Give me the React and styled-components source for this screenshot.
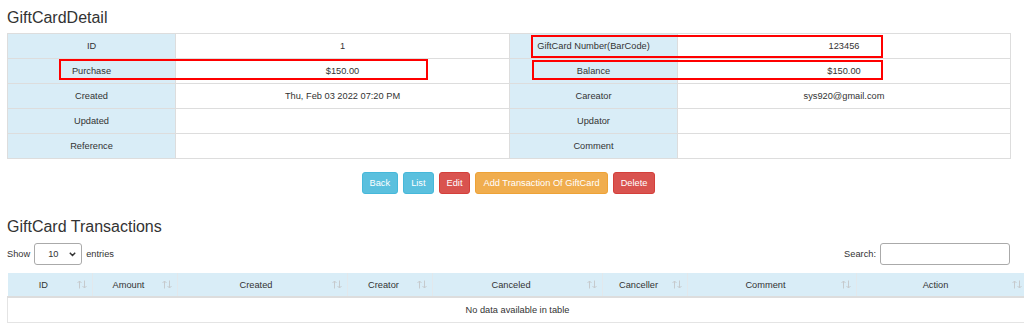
import React from 'react';
import styled, { createGlobalStyle } from 'styled-components';

const GlobalStyle = createGlobalStyle`
    html, body {
        margin: 0;
        padding: 0;
        overflow: hidden;
        background: #fff;
    }
    body {
        font-family: "Liberation Sans", Arial, Helvetica, sans-serif;
        color: #333;
    }
`;

const Page = styled.div`
    width: 1024px;
    padding-left: 7px;
    box-sizing: border-box;
    overflow: hidden;
`;

const Heading = styled.h3`
    margin: ${(p) => p.$top}px 0 ${(p) => p.$bottom}px;
    font-size: 16px;
    line-height: 18px;
    font-weight: normal;
    color: #333;
`;

const DetailWrap = styled.div`
    position: relative;
    width: 1003px;
`;

const DetailTable = styled.table`
    width: 1003px;
    border-collapse: collapse;
    table-layout: fixed;
`;

const Cell = styled.td`
    border: 1px solid #ddd;
    padding: 0 5px;
    line-height: 24px;
    height: 24px;
    font-size: 9.25px;
    text-align: center;
    white-space: nowrap;
    background: ${(p) => (p.$label ? '#d9edf7' : '#fff')};
    color: #333;
`;

const Highlight = styled.div`
    position: absolute;
    top: ${(p) => p.$top}px;
    left: ${(p) => p.$left}px;
    width: ${(p) => p.$width}px;
    height: ${(p) => p.$height}px;
    border: 2px solid #f00;
    box-sizing: border-box;
    pointer-events: none;
`;

const ButtonBar = styled.div`
    width: 1003px;
    margin-top: 13px;
    display: flex;
    justify-content: center;
    gap: 5px;
`;

const colors = {
    info: ['#5bc0de', '#46b8da'],
    danger: ['#d9534f', '#d43f3a'],
    warning: ['#f0ad4e', '#eea236'],
};

const Button = styled.button`
    height: 22px;
    padding: 0 7px;
    border: 1px solid ${(p) => colors[p.$kind][1]};
    border-radius: 3px;
    background: ${(p) => colors[p.$kind][0]};
    color: #fff;
    font-family: inherit;
    font-size: 9.25px;
    line-height: 20px;
    cursor: pointer;
`;

const Controls = styled.div`
    width: 1003px;
    display: flex;
    justify-content: space-between;
    align-items: center;
    margin-bottom: 8px;
    font-size: 9.25px;
    color: #333;
`;

const ControlGroup = styled.label`
    display: flex;
    align-items: center;
    gap: 4px;
`;

const SelectBox = styled.div`
    position: relative;
    width: 48px;
    height: 22px;
`;

const Select = styled.select`
    appearance: none;
    width: 100%;
    height: 100%;
    border: 1px solid #aaa;
    border-radius: 3px;
    background: #fff;
    padding: 0 0 0 13px;
    font-family: inherit;
    font-size: 9.25px;
    color: #333;
`;

const Chevron = styled.svg`
    position: absolute;
    right: 6px;
    top: 9px;
    pointer-events: none;
`;

const SearchInput = styled.input`
    width: 130px;
    height: 22px;
    box-sizing: border-box;
    border: 1px solid #aaa;
    border-radius: 3px;
    padding: 0 4px;
    font-size: 9.25px;
`;

const TxTable = styled.table`
    width: 1020px;
    border-collapse: collapse;
    table-layout: fixed;
`;

const HeadCell = styled.th`
    background: #d9edf7;
    border-right: 1px solid #e2e8ec;
    border-bottom: 2px solid #ddd;
    padding: 0 5px;
    height: 23px;
    font-size: 9.25px;
    font-weight: normal;
    color: #333;
`;

const HeadInner = styled.div`
    display: flex;
    align-items: center;
`;

const HeadLabel = styled.span`
    flex: 1;
    text-align: center;
    padding-right: 3px;
`;

const EmptyCell = styled.td`
    border: 1px solid #e4e4e4;
    border-top: none;
    line-height: 24px;
    height: 24px;
    padding: 0;
    text-align: center;
    font-size: 9.25px;
    color: #333;
`;

function SortIcon() {
    return (
        <svg width="10" height="9" viewBox="0 0 10 9" fill="none" stroke="#c6cacd" strokeWidth="1">
            <path d="M2.5 8.5V1M0.5 3L2.5 1L4.5 3" />
            <path d="M7.5 0.5V8M5.5 6L7.5 8L9.5 6" />
        </svg>
    );
}

const detailRows = [
    ['ID', '1', 'GiftCard Number(BarCode)', '123456'],
    ['Purchase', '$150.00', 'Balance', '$150.00'],
    ['Created', 'Thu, Feb 03 2022 07:20 PM', 'Careator', 'sys920@gmail.com'],
    ['Updated', '', 'Updator', ''],
    ['Reference', '', 'Comment', ''],
];

const columns = [
    { name: 'ID', width: 85 },
    { name: 'Amount', width: 85 },
    { name: 'Created', width: 170 },
    { name: 'Creator', width: 85 },
    { name: 'Canceled', width: 170 },
    { name: 'Canceller', width: 85 },
    { name: 'Comment', width: 169 },
    { name: 'Action', width: 171 },
];

export default function App() {
    return (
        <>
            <GlobalStyle />
            <Page>
                <Heading $top={9} $bottom={6}>GiftCardDetail</Heading>
                <DetailWrap>
                    <DetailTable>
                        <colgroup>
                            <col style={{ width: 168 }} />
                            <col style={{ width: 334 }} />
                            <col style={{ width: 168 }} />
                            <col style={{ width: 333 }} />
                        </colgroup>
                        <tbody>
                            {detailRows.map((row) => (
                                <tr key={row[0]}>
                                    <Cell $label>{row[0]}</Cell>
                                    <Cell>{row[1]}</Cell>
                                    <Cell $label>{row[2]}</Cell>
                                    <Cell>{row[3]}</Cell>
                                </tr>
                            ))}
                        </tbody>
                    </DetailTable>
                    <Highlight $top={26} $left={52} $width={369} $height={21} />
                    <Highlight $top={2} $left={524} $width={352} $height={23} />
                    <Highlight $top={27} $left={525} $width={351} $height={20} />
                </DetailWrap>

                <ButtonBar>
                    <Button $kind="info">Back</Button>
                    <Button $kind="info">List</Button>
                    <Button $kind="danger">Edit</Button>
                    <Button $kind="warning">Add Transaction Of GiftCard</Button>
                    <Button $kind="danger">Delete</Button>
                </ButtonBar>

                <Heading $top={24} $bottom={7}>GiftCard Transactions</Heading>
                <Controls>
                    <ControlGroup>
                        Show
                        <SelectBox>
                            <Select defaultValue="10">
                                <option value="10">10</option>
                                <option value="25">25</option>
                                <option value="50">50</option>
                                <option value="100">100</option>
                            </Select>
                            <Chevron width="7" height="5" viewBox="0 0 7 5" fill="none" stroke="#333" strokeWidth="1.4">
                                <path d="M0.8 0.8L3.5 3.6L6.2 0.8" />
                            </Chevron>
                        </SelectBox>
                        entries
                    </ControlGroup>
                    <ControlGroup>
                        Search:
                        <SearchInput type="search" />
                    </ControlGroup>
                </Controls>

                <TxTable>
                    <colgroup>
                        {columns.map((c) => (
                            <col key={c.name} style={{ width: c.width }} />
                        ))}
                    </colgroup>
                    <thead>
                        <tr>
                            {columns.map((c) => (
                                <HeadCell key={c.name}>
                                    <HeadInner>
                                        <HeadLabel>{c.name}</HeadLabel>
                                        <SortIcon />
                                    </HeadInner>
                                </HeadCell>
                            ))}
                        </tr>
                    </thead>
                    <tbody>
                        <tr>
                            <EmptyCell colSpan={8}>No data available in table</EmptyCell>
                        </tr>
                    </tbody>
                </TxTable>
            </Page>
        </>
    );
}
